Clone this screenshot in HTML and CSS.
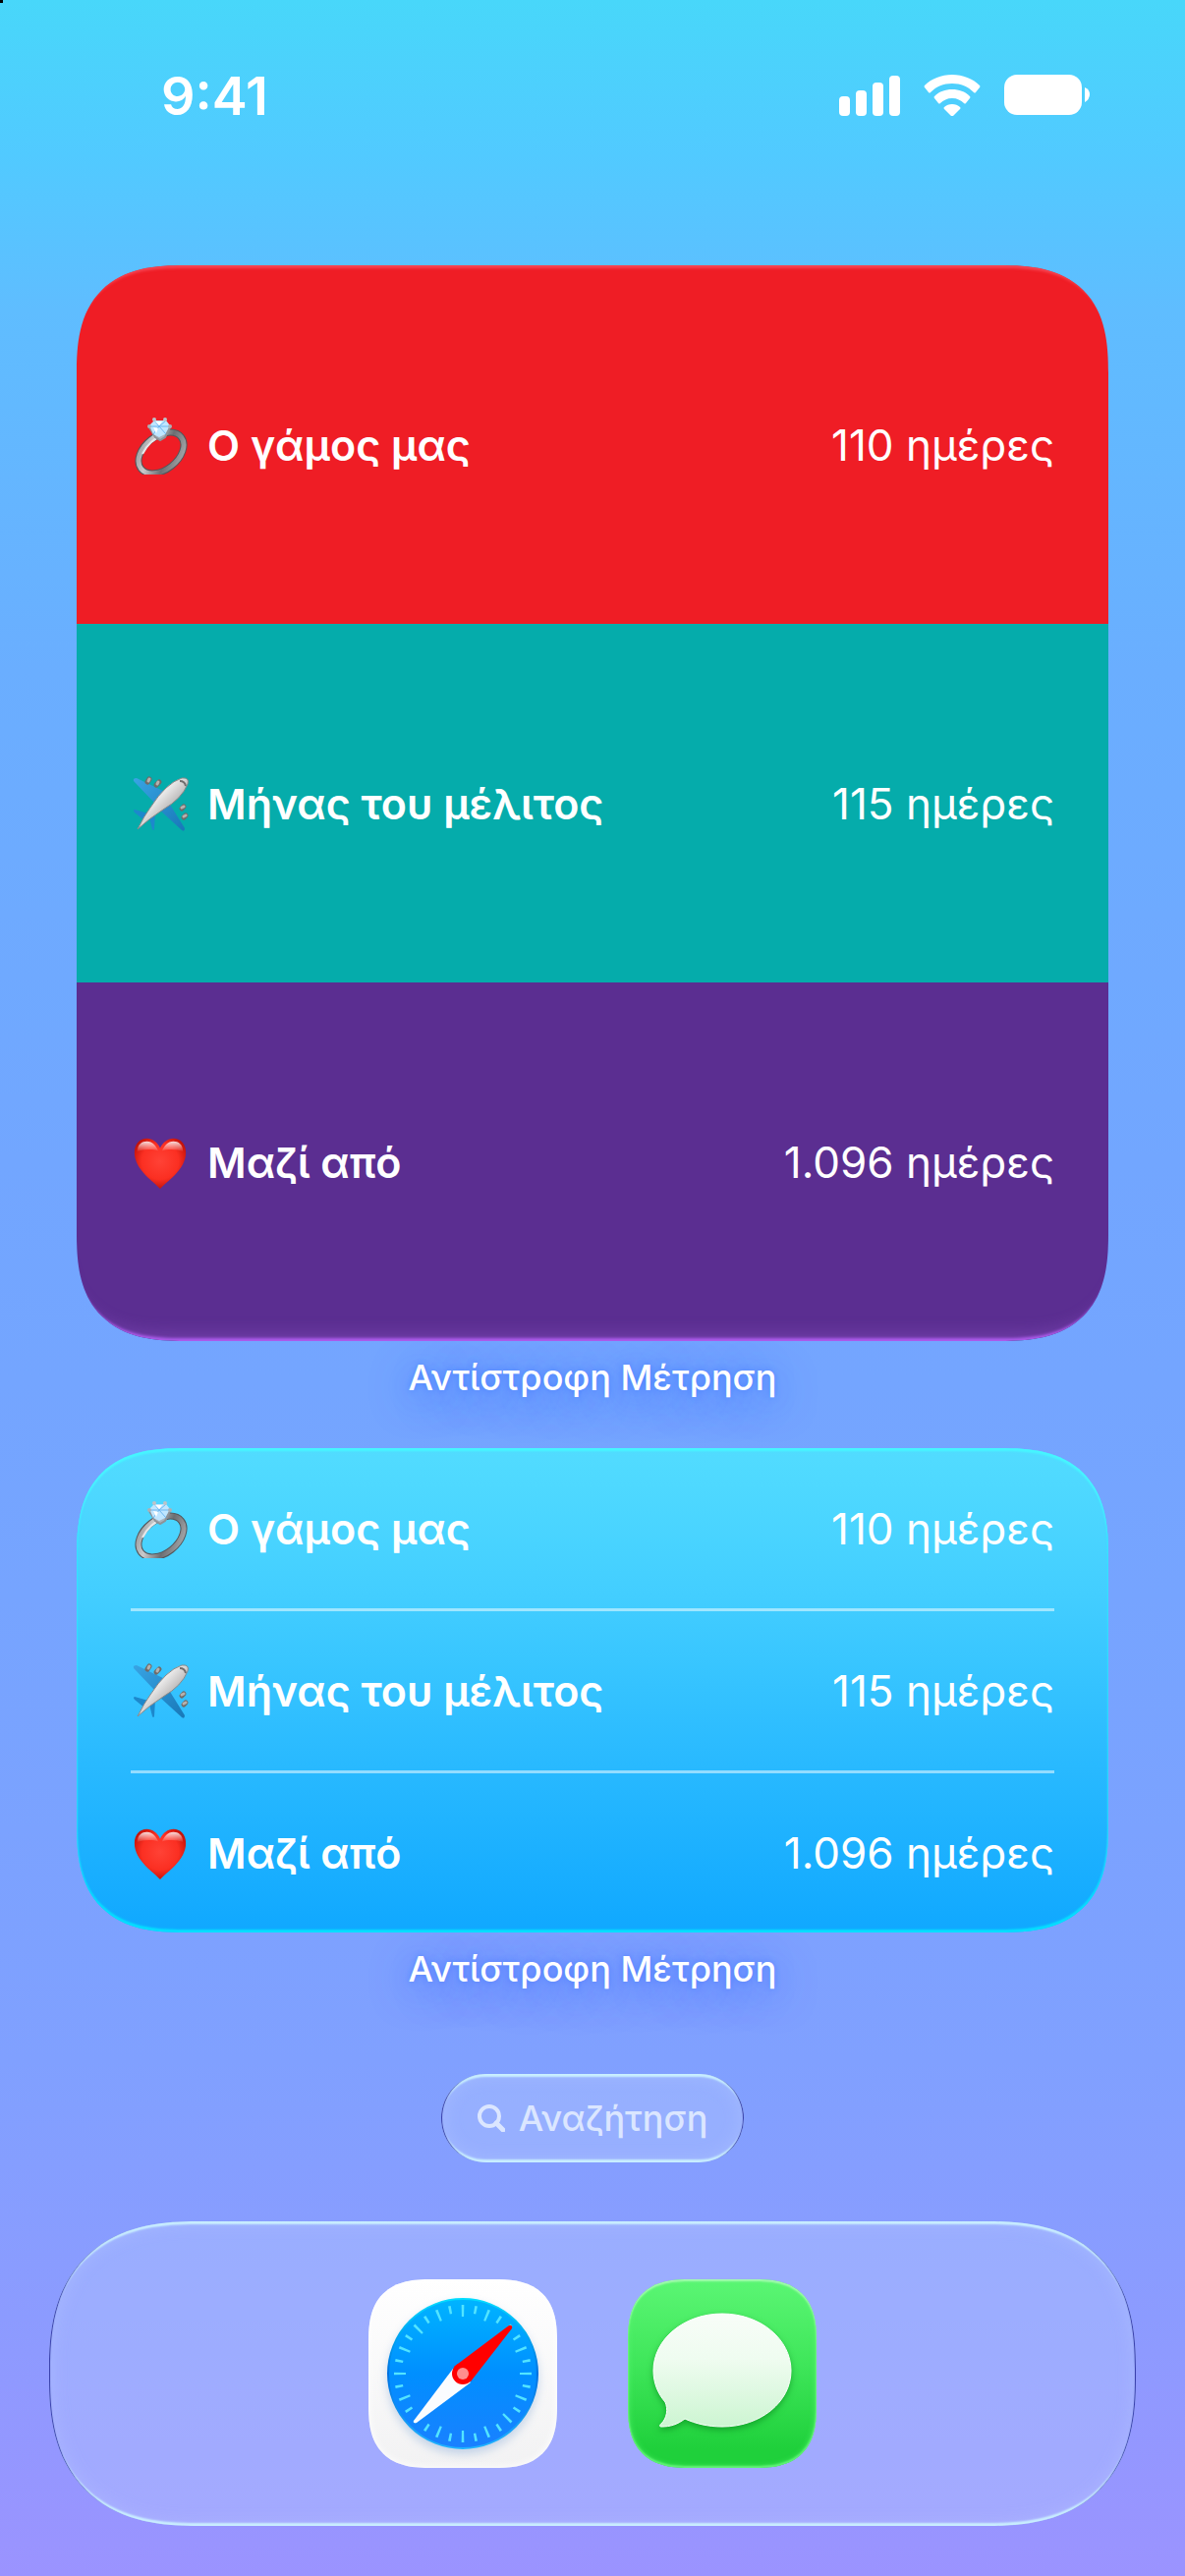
FILE: index.html
```
<!DOCTYPE html>
<html lang="el">
<head>
    <meta charset="UTF-8">
    <meta name="viewport" content="width=device-width, initial-scale=1">
    <title>Αντίστροφη Μέτρηση</title>
    <link rel="stylesheet" href="styles.css">
</head>
<body>

<!-- shared icons, used by both widgets -->
<svg class="defs" width="0" height="0" aria-hidden="true">
    <defs>
        <linearGradient id="silver" x1="0" y1="0" x2="1" y2="1">
            <stop offset="0" stop-color="#8d8f92"/>
            <stop offset=".3" stop-color="#c9cacc"/>
            <stop offset=".6" stop-color="#6c6e72"/>
            <stop offset="1" stop-color="#b2b4b7"/>
        </linearGradient>
        <linearGradient id="hull" x1="0" y1="0" x2="1" y2="1">
            <stop offset="0.3" stop-color="#ffffff"/>
            <stop offset=".75" stop-color="#9f9c9c"/>
        </linearGradient>
        <linearGradient id="wing" x1="0" y1="0" x2="1" y2="1">
            <stop offset="0" stop-color="#38a4e4"/>
            <stop offset="1" stop-color="#1878b8"/>
        </linearGradient>
        <radialGradient id="love" cx=".5" cy=".45" r=".6">
            <stop offset="0" stop-color="#ff4236"/>
            <stop offset=".6" stop-color="#fb2f22"/>
            <stop offset="1" stop-color="#b80d05"/>
        </radialGradient>
        <linearGradient id="shine" x1="0" y1="0" x2="0" y2="1">
            <stop offset="0" stop-color="#fff" stop-opacity=".85"/>
            <stop offset="1" stop-color="#fff" stop-opacity="0"/>
        </linearGradient>
    </defs>
    <symbol id="ring" viewBox="0 0 60 60">
        <ellipse cx="31" cy="38" rx="26" ry="17" transform="rotate(-38 31 38)" fill="none" stroke="#54565a" stroke-width="7"/>
        <ellipse cx="31" cy="38" rx="26" ry="17" transform="rotate(-38 31 38)" fill="none" stroke="url(#silver)" stroke-width="5"/>
        <path d="M12 39Q19 25 34 19" fill="none" stroke="#e6e7e9" stroke-width="2"/>
        <path d="M19 12l6 10 5 3 5-3 5-10" fill="#a8b4bf" stroke="#8d9399" stroke-width="2"/>
        <path d="M19 10l5-5h12l4 5-5 9-6 3-6-3z" fill="#bfe6ff"/>
        <path d="M24 5l5 6 7-6M19 11h21M23 19l6-8 7 8" fill="none" stroke="#6db6f0" stroke-width="1"/>
        <path d="M25 6l4 4 3-4zM23 12l5 1-2 5z" fill="#fff"/>
        <circle cx="24" cy="4" r="2" fill="#bcc3c9"/>
        <circle cx="35" cy="4" r="2" fill="#bcc3c9"/>
        <circle cx="19" cy="11" r="2" fill="#aab1b8"/>
        <circle cx="40" cy="11" r="2" fill="#aab1b8"/>
    </symbol>
    <symbol id="plane" viewBox="0 0 60 60">
        <path d="M18 40L4 36q-2 1 0 3l11 9zM19 44l3 12q1 2 2 0l1-17z" fill="#1d88cc"/>
        <path d="M37 19L6 4Q2 4 3 7l21 22zM37 26l18 29q0 4-3 2L29 36z" fill="url(#wing)"/>
        <path d="M17 8l2-3M26 11l3-3M52 35l2-2M54 44l2-2" stroke="#6f6b69" stroke-width="5" stroke-linecap="round"/>
        <path d="M18 7l1-2M27 10l1-2M52 34l2-1M54 43l2-1" stroke="#b5b1af" stroke-width="3" stroke-linecap="round"/>
        <path d="M7 56Q14 42 20 34 36 9 52 4q8-1 6 6Q52 25 33 36 19 45 7 56z" fill="url(#hull)" stroke="#8b8989" stroke-width="1"/>
        <path d="M50 7q5 0 6 5" fill="none" stroke="#6f6d6d" stroke-width="2"/>
    </symbol>
    <symbol id="heart" viewBox="-1 -2 62 62">
        <path d="M30 57C24 50 3 37 3 19 3 9 9 4 16 4c6 0 11 4 14 10C33 8 38 4 44 4c7 0 13 5 13 15 0 18-21 31-27 38z" fill="url(#love)"/>
        <path d="M6 18C6 10 11 7 16 7c6 0 10 5 12 10-6-2-16-2-22 1zM54 18C54 10 49 7 44 7c-6 0-10 5-12 10 6-2 16-2 22 1z" fill="url(#shine)"/>
    </symbol>
</svg>

<header class="status-bar">
    <time class="clock">9:41</time>
    <div class="indicators">
        <svg width="62" height="42" viewBox="0 0 62 42" fill="#fff">
            <rect x="0" y="22" width="11" height="20" rx="4"/>
            <rect x="17" y="16" width="11" height="26" rx="4"/>
            <rect x="34" y="8" width="11" height="34" rx="4"/>
            <rect x="51" y="1" width="11" height="41" rx="4"/>
        </svg>
        <svg width="58" height="42" viewBox="0 0 58 42" fill="#fff">
            <path d="M29 0C18 0 8 4 1 11q-1 1 0 2l4 5q1 1 2 0C13 12 20 9 29 9s16 3 22 9q1 1 2 0l4-5q1-1 0-2C50 4 40 0 29 0z"/>
            <path d="M29 15c-7 0-13 2-18 7q-1 1 0 2l4 5q1 1 2 0c3-3 7-5 12-5s9 2 12 5q1 1 2 0l4-5q1-1 0-2c-5-5-11-7-18-7z"/>
            <path d="M29 30c-3 0-6 1-8 3q-1 1 0 2l7 7q1 1 2 0l7-7q1-1 0-2c-2-2-5-3-8-3z"/>
        </svg>
        <svg width="88" height="42" viewBox="0 0 88 42" fill="#fff">
            <rect x="0" y="0" width="79" height="41" rx="13"/>
            <path d="M82 13q5 2 5 7t-5 8z"/>
        </svg>
    </div>
</header>

<main>
    <section class="widget-wrap">
        <ul class="widget large">
            <li class="event red">
                <svg class="emoji"><use href="#ring"/></svg>
                <span class="name">Ο γάμος μας</span>
                <span class="days">110 ημέρες</span>
            </li>
            <li class="event teal">
                <svg class="emoji"><use href="#plane"/></svg>
                <span class="name">Μήνας του μέλιτος</span>
                <span class="days">115 ημέρες</span>
            </li>
            <li class="event purple">
                <svg class="emoji"><use href="#heart"/></svg>
                <span class="name">Μαζί από</span>
                <span class="days">1.096 ημέρες</span>
            </li>
        </ul>
        <h2 class="caption">Αντίστροφη Μέτρηση</h2>
    </section>

    <section class="widget-wrap">
        <ul class="widget medium">
            <li class="event">
                <svg class="emoji"><use href="#ring"/></svg>
                <span class="name">Ο γάμος μας</span>
                <span class="days">110 ημέρες</span>
            </li>
            <li class="event">
                <svg class="emoji"><use href="#plane"/></svg>
                <span class="name">Μήνας του μέλιτος</span>
                <span class="days">115 ημέρες</span>
            </li>
            <li class="event">
                <svg class="emoji"><use href="#heart"/></svg>
                <span class="name">Μαζί από</span>
                <span class="days">1.096 ημέρες</span>
            </li>
        </ul>
        <h2 class="caption">Αντίστροφη Μέτρηση</h2>
    </section>

    <button class="search glass" type="button">
        <svg width="28" height="28" viewBox="0 0 28 28" fill="none" stroke="currentColor" stroke-linecap="round">
            <circle cx="12" cy="12" r="10" stroke-width="4"/>
            <path d="M19 19l7 7" stroke-width="5"/>
        </svg>
        Αναζήτηση
    </button>
</main>

<nav class="dock glass">
    <a class="app safari" href="#" aria-label="Safari">
        <svg viewBox="0 0 192 192">
            <defs>
                <linearGradient id="sea" x1="0" y1="0" x2="0" y2="1">
                    <stop offset="0" stop-color="#00b4ff"/>
                    <stop offset=".5" stop-color="#008fff"/>
                    <stop offset="1" stop-color="#1a80ff"/>
                </linearGradient>
                <linearGradient id="rim" x1="0" y1="0" x2="0" y2="1">
                    <stop offset="0" stop-color="#00dcff"/>
                    <stop offset=".5" stop-color="#0070e0"/>
                    <stop offset="1" stop-color="#20b4ff"/>
                </linearGradient>
            </defs>
            <circle class="dial" cx="96" cy="96" r="76" fill="url(#sea)" stroke="url(#rim)" stroke-width="2"/>
            <g fill="none" stroke="#52e4ff" stroke-width="2">
                <!-- 16 long ticks, 16 short ones between them -->
                <circle cx="96" cy="96" r="64" pathLength="320" stroke-width="12" stroke-dasharray="2 18" stroke-dashoffset="1"/>
                <circle cx="96" cy="96" r="66" pathLength="320" stroke-width="8" stroke-dasharray="2 18" stroke-dashoffset="-9"/>
            </g>
            <path d="M86 91L46 144q-1 3 3 2l55-41z" fill="#fafcff"/>
            <path d="M87 89l56-42q4-1 3 3l-42 54z" fill="#f00"/>
            <circle cx="96" cy="96" r="11" fill="#f00"/>
            <circle cx="96" cy="96" r="6" fill="#ff8d8d"/>
        </svg>
    </a>
    <a class="app messages" href="#" aria-label="Messages">
        <svg viewBox="0 0 192 192">
            <defs>
                <linearGradient id="bubble" x1="0" y1="0" x2="0" y2="1">
                    <stop offset="0" stop-color="#f8fdf8"/>
                    <stop offset=".4" stop-color="#effcf0"/>
                    <stop offset="1" stop-color="#cdf5d2"/>
                </linearGradient>
            </defs>
            <path class="bubble" d="M96 35c39 0 70 26 70 58s-31 57-70 57c-14 0-27-3-38-8-8 6-15 8-24 8-2 0-2-2 0-3 6-6 7-15 4-22C31 117 26 106 26 93c0-32 31-58 70-58z" fill="url(#bubble)" stroke="#fff" stroke-width="1"/>
        </svg>
    </a>
</nav>

</body>
</html>
```
FILE: styles.css
```
* {
    box-sizing: border-box;
}

body {
    margin: 0;
    min-height: 100vh;
    display: flex;
    flex-direction: column;
    font-family: Inter, "Noto Sans", sans-serif;
    color: #fff;
    background: linear-gradient(#48d7fa 0%, #51caff 6%, #5fbdff 12%, #6aaeff 26%, #72a6ff 45%, #76a4ff 62%, #80a0ff 80%, #8c9bff 90%, #9b93ff 100%);
}

/* screen corner */
body::before {
    content: "";
    position: absolute;
    top: 0;
    left: 0;
    width: 3px;
    height: 3px;
    background: #000;
}

.defs {
    position: absolute;
}

/* status bar */
.status-bar {
    display: flex;
    justify-content: space-between;
    align-items: center;
    height: 194px;
    padding: 0 96px 0 164px;
}

.clock {
    font-size: 54px;
    font-weight: 600;
}

.indicators {
    display: flex;
    align-items: center;
    gap: 24px;
}

/* widgets */
main {
    flex: 1;
    display: flex;
    flex-direction: column;
    align-items: center;
    padding: 76px 78px 0;
}

.widget-wrap {
    width: 100%;
}

.widget {
    position: relative;
    margin: 0;
    padding: 0;
    list-style: none;
    overflow: hidden;
    border-radius: 84px;
}

.event {
    display: flex;
    align-items: center;
    padding: 0 55px;
    font-size: 44px;
    line-height: 56px;
}

.emoji {
    width: 60px;
    height: 60px;
    margin-right: 18px;
}

.name {
    flex: 1;
    font-size: 43px;
    font-weight: 600;
}

.large .event {
    height: 365px;
}

.large::after {
    content: "";
    position: absolute;
    inset: 0;
    border-radius: inherit;
    box-shadow: inset 0 6px 3px -3px rgba(255, 110, 130, .5), inset 0 -6px 3px -3px rgba(190, 100, 255, .8), inset 0 -24px 16px -16px rgba(160, 100, 220, .3);
}

.red {
    background: #ef1d25;
}

.teal {
    background: #05acab;
}

.purple {
    background: #5b2e91;
}

.medium {
    background: linear-gradient(#52dcff, #43ceff 30%, #2bbbff 62%, #10a8ff);
    box-shadow: inset 0 3px 2px #46f6ff, inset 0 -3px 2px #04e0ff, inset 0 0 3px rgba(70, 230, 255, .6);
}

.medium .event {
    position: relative;
    height: 163px;
}

.medium .event + .event {
    height: 165px;
    padding-top: 3px;
}

.medium .event + .event::before {
    content: "";
    position: absolute;
    top: 0;
    left: 55px;
    right: 55px;
    height: 3px;
    background: rgba(255, 255, 255, .5);
}

.caption {
    margin: 0;
    height: 109px;
    padding-top: 13px;
    font-size: 36px;
    line-height: 48px;
    font-weight: 500;
    text-align: center;
    text-shadow: 0 8px 40px rgba(30, 90, 255, .7), 0 0 6px rgba(40, 100, 255, .4);
}

/* glass parts */
.glass {
    background: rgba(186, 205, 255, .36);
    border: 0;
    box-shadow: inset 2px 0 1px -1px #2f35a5, inset -2px 0 1px -1px #2f35a5, inset 0 4px 2px -1px rgba(205, 245, 255, .9), inset 0 -4px 2px -1px rgba(205, 245, 255, .9), inset 0 0 3px rgba(200, 225, 255, .5), inset 0 0 20px rgba(200, 215, 255, .3);
}

.search {
    display: flex;
    justify-content: center;
    align-items: center;
    gap: 14px;
    height: 90px;
    margin-top: 35px;
    padding: 0 37px;
    border-radius: 45px;
    font: 500 36px Inter, "Noto Sans", sans-serif;
    color: #dbe6ff;
}

/* dock */
.dock {
    display: flex;
    justify-content: center;
    align-items: center;
    gap: 72px;
    height: 310px;
    margin: 0 50px 51px;
    border-radius: 120px;
}

.app {
    width: 192px;
    height: 192px;
    border-radius: 50px;
}

.app svg {
    display: block;
}

.safari {
    background: linear-gradient(#fff, #f2f2f3);
    box-shadow: inset 0 0 8px #fff;
}

.dial {
    filter: drop-shadow(0 5px 5px rgba(0, 80, 180, .2));
}

.messages {
    background: linear-gradient(#5bf674, #3fe65a 45%, #1fd03b 90%);
    box-shadow: inset 0 2px 2px #a6fbb1, inset 0 -2px 2px #62f378, inset 0 0 6px #5cf573;
}

.bubble {
    filter: drop-shadow(0 3px 3px rgba(0, 120, 20, .5));
}

@supports (corner-shape: squircle) {
    .widget,
    .large::after {
        border-radius: 110px;
        corner-shape: superellipse(1.4);
    }

    .dock {
        border-radius: 150px;
        corner-shape: superellipse(1.3);
    }

    .app {
        border-radius: 64px;
        corner-shape: superellipse(1.4);
    }
}
```
